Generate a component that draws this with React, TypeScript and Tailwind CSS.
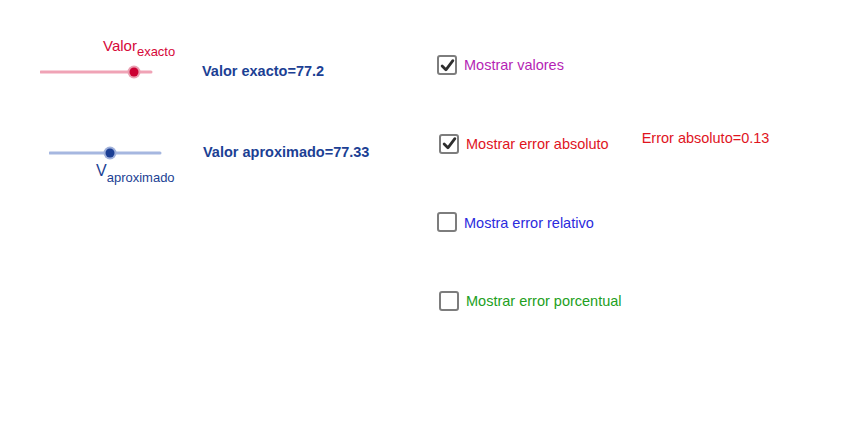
const font = { fontFamily: '"Liberation Sans", Arial, sans-serif' };

interface SliderProps {
  width: number;
  lineEnd: number;
  dot: number;
  line: string;
  fill: string;
  halo: string;
}

function SliderTrack({ width, lineEnd, dot, line, fill, halo }: SliderProps) {
  return (
    <svg width={width} height="20" className="shrink-0">
      <line x1="1" y1="10" x2={lineEnd} y2="10" stroke={line} strokeWidth="3" strokeLinecap="round" />
      <circle cx={dot} cy="10" r="6.5" fill={halo} />
      <circle cx={dot} cy="10" r="4.5" fill={fill} />
    </svg>
  );
}

function Box({ checked }: { checked: boolean }) {
  return (
    <span className="w-[20px] h-[20px] rounded-[3px] border-2 border-[#7d7d7d] bg-white flex items-center justify-center shrink-0">
      {checked && (
        <svg width="15" height="15" viewBox="0 0 14 14">
          <path d="M2 7.5 L5.5 11 L12 2.5" fill="none" stroke="#2e2e2e" strokeWidth="2.6" strokeLinecap="round" strokeLinejoin="round" />
        </svg>
      )}
    </span>
  );
}

function Check({ checked, color, label, className = "" }: { checked: boolean; color: string; label: string; className?: string }) {
  return (
    <div className={`flex items-center gap-[7px] h-[20px] ${className}`}>
      <Box checked={checked} />
      <span className={`text-[14.5px] whitespace-nowrap mt-[2px] ${color}`}>{label}</span>
    </div>
  );
}

export default function App() {
  return (
    <div className="w-[843px] h-[434px] bg-white overflow-hidden flex items-start pl-[40px]" style={font}>
      {/* sliders */}
      <div className="w-[397px] pt-[62px] flex flex-col gap-[61px]">
        <div className="relative flex items-center h-[20px]">
          <span className="absolute left-[63px] -top-[28px] text-[#d6083a] whitespace-nowrap">
            <span className="text-[15px]">Valor</span>
            <span className="text-[13px] relative top-[5px]">exacto</span>
          </span>
          <SliderTrack width={162} lineEnd={111} dot={94} line="#f0a3b6" fill="#cc0033" halo="#eaa0b2" />
          <span className="text-[14.5px] font-bold text-[#1c3f94] whitespace-nowrap">Valor exacto=77.2</span>
        </div>
        <div className="relative flex items-center h-[20px] ml-[9px]">
          <span className="absolute left-[47px] top-[16px] text-[#1c3f94] whitespace-nowrap">
            <span className="text-[16px]">V</span>
            <span className="text-[13px] relative top-[6px]">aproximado</span>
          </span>
          <SliderTrack width={154} lineEnd={111} dot={61} line="#a6b7e0" fill="#1c3f94" halo="#9fb0da" />
          <span className="text-[14.5px] font-bold text-[#1c3f94] whitespace-nowrap">Valor aproximado=77.33</span>
        </div>
      </div>

      {/* checkboxes */}
      <div className="pt-[55px] flex flex-col gap-[58.7px]">
        <Check checked color="text-[#b51fb5]" label="Mostrar valores" />
        <div className="flex items-center ml-[2px]">
          <Check checked color="text-[#e0141e]" label="Mostrar error absoluto" />
          <span className="ml-[33px] -mt-[10px] text-[14.5px] text-[#e0141e] whitespace-nowrap">Error absoluto=0.13</span>
        </div>
        <Check checked={false} color="text-[#2b2bdd]" label="Mostra error relativo" />
        <Check checked={false} color="text-[#22a022]" label="Mostrar error porcentual" className="ml-[2px]" />
      </div>
    </div>
  );
}
